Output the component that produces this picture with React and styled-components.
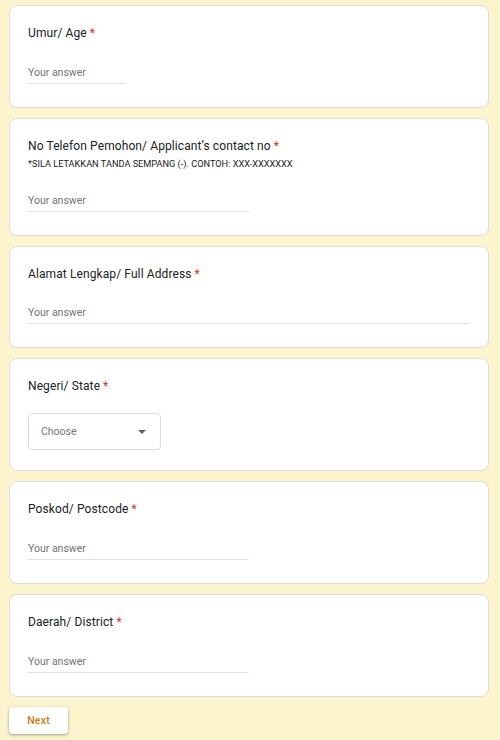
import React from 'react'
import styled, { createGlobalStyle } from 'styled-components'

const GlobalStyle = createGlobalStyle`
    html, body {
        margin: 0;
        padding: 0;
        background: #fdf3cd;
    }
    body {
        font-family: Roboto, "Liberation Sans", Arial, sans-serif;
    }
`

const Page = styled.div`
    width: 480px;
    padding: 5px 0 0 9px;
    display: flex;
    flex-direction: column;
    gap: 10px;
`

const Card = styled.div`
    background: #fff;
    border: 1px solid #dadce0;
    border-radius: 8px;
    padding: 18px 18px 17px;
    display: flex;
    flex-direction: column;
`

const Title = styled.div`
    font-size: 12px;
    line-height: 18px;
    color: #202124;
    letter-spacing: 0.1px;
`

const Star = styled.span`
    color: #d93025;
    margin-left: 3px;
`

const Note = styled.div`
    margin-top: 3px;
    font-size: 9.2px;
    line-height: 12px;
    color: #202124;
`

const Answer = styled.div`
    margin-top: ${p => p.$top || 21}px;
    margin-bottom: 6px;
    width: ${p => p.$width};
    height: 20px;
    border-bottom: 1px solid #e0e0e0;
    font-size: 10.5px;
    line-height: 20px;
    color: #70757a;
`

const Select = styled.div`
    margin-top: 18px;
    margin-bottom: 3px;
    width: 133px;
    height: 37px;
    box-sizing: border-box;
    border: 1px solid #dadce0;
    border-radius: 4px;
    padding: 0 12px;
    display: flex;
    align-items: center;
    justify-content: space-between;
    font-size: 10.5px;
    color: #70757a;
`

const Caret = styled.span`
    width: 0;
    height: 0;
    border-left: 4px solid transparent;
    border-right: 4px solid transparent;
    border-top: 4px solid #5f6368;
    margin-right: 2px;
`

const Footer = styled.div`
    display: flex;
    padding-bottom: 10px;
`

const NextButton = styled.button`
    width: 59px;
    height: 27px;
    border: none;
    border-radius: 4px;
    background: #fff;
    box-shadow: 0 1px 2px rgba(60, 64, 67, 0.3), 0 1px 3px 1px rgba(60, 64, 67, 0.15);
    font-family: Roboto, "Liberation Sans", Arial, sans-serif;
    font-size: 10.5px;
    font-weight: 500;
    letter-spacing: 0.2px;
    color: #d17d14;
    padding: 0;
`

function Question({ label, note, width, top }) {
    return (
        <Card>
            <Title>{label}<Star>*</Star></Title>
            {note && <Note>{note}</Note>}
            <Answer $width={width} $top={top}>Your answer</Answer>
        </Card>
    )
}

export default function App() {
    return (
        <>
            <GlobalStyle />
            <Page>
                <Question label="Umur/ Age" width="97px" />
                <Question
                    label="No Telefon Pemohon/ Applicant’s contact no"
                    note="*SILA LETAKKAN TANDA SEMPANG (-). CONTOH: XXX-XXXXXXX"
                    width="221px"
                />
                <Question label="Alamat Lengkap/ Full Address" width="442px" top={20} />
                <Card>
                    <Title>Negeri/ State<Star>*</Star></Title>
                    <Select>
                        Choose
                        <Caret />
                    </Select>
                </Card>
                <Question label="Poskod/ Postcode" width="221px" />
                <Question label="Daerah/ District" width="221px" />
                <Footer>
                    <NextButton>Next</NextButton>
                </Footer>
            </Page>
        </>
    )
}
